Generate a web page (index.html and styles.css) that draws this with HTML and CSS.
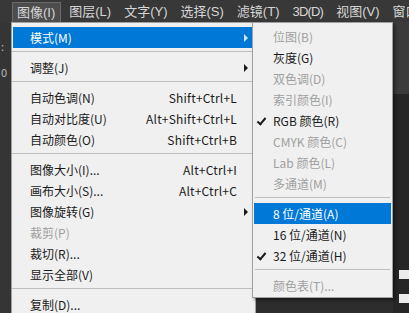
FILE: index.html
```html
<!DOCTYPE html>
<html lang="zh-CN">
<head>
  <meta charset="UTF-8">
  <title>图像 - 模式</title>
  <link rel="stylesheet" href="styles.css">
</head>
<body>
  <div class="app">
    <div class="menubar">
      <span class="bar-item active">图像(I)</span>
      <span class="bar-item">图层(L)</span>
      <span class="bar-item">文字(Y)</span>
      <span class="bar-item">选择(S)</span>
      <span class="bar-item">滤镜(T)</span>
      <span class="bar-item narrow">3D(D)</span>
      <span class="bar-item">视图(V)</span>
      <span class="bar-item">窗口</span>
    </div>

    <div class="workspace">
      <div class="left-strip">
        <span class="mark">:</span>
        <span class="mark">0</span>
      </div>
      <div class="canvas-area"></div>
      <div class="right-panel">
        <div class="panel-top"></div>
        <div class="panel-body">
          <div class="panel-row"></div>
          <div class="panel-row"></div>
        </div>
      </div>
    </div>

    <!-- main dropdown -->
    <div class="menu main-menu">
      <div class="item selected">模式(M)<span class="arrow"></span></div>
      <div class="sep"></div>
      <div class="item">调整(J)<span class="arrow"></span></div>
      <div class="sep"></div>
      <div class="item">自动色调(N)<span class="key">Shift+Ctrl+L</span></div>
      <div class="item">自动对比度(U)<span class="key">Alt+Shift+Ctrl+L</span></div>
      <div class="item">自动颜色(O)<span class="key">Shift+Ctrl+B</span></div>
      <div class="sep"></div>
      <div class="item">图像大小(I)...<span class="key">Alt+Ctrl+I</span></div>
      <div class="item">画布大小(S)...<span class="key">Alt+Ctrl+C</span></div>
      <div class="item">图像旋转(G)<span class="arrow"></span></div>
      <div class="item disabled">裁剪(P)</div>
      <div class="item">裁切(R)...</div>
      <div class="item">显示全部(V)</div>
      <div class="sep"></div>
      <div class="item">复制(D)...</div>
    </div>

    <!-- mode submenu -->
    <div class="menu sub-menu">
      <div class="item disabled">位图(B)</div>
      <div class="item">灰度(G)</div>
      <div class="item disabled">双色调(D)</div>
      <div class="item disabled">索引颜色(I)</div>
      <div class="item checked">RGB 颜色(R)</div>
      <div class="item disabled">CMYK 颜色(C)</div>
      <div class="item disabled">Lab 颜色(L)</div>
      <div class="item disabled">多通道(M)</div>
      <div class="sep"></div>
      <div class="item selected">8 位/通道(A)</div>
      <div class="item">16 位/通道(N)</div>
      <div class="item checked">32 位/通道(H)</div>
      <div class="sep"></div>
      <div class="item disabled">颜色表(T)...</div>
    </div>
  </div>
</body>
</html>
```

FILE: styles.css
```css
body {
  margin: 0;
  background-color: #2a2a2a;
  font-family: "Noto Sans CJK SC", "Noto Sans", sans-serif;
  overflow: hidden;
}

.app {
  position: relative;
  width: 409px;
  height: 313px;
  display: flex;
  flex-direction: column;
}

/* top menubar */
.menubar {
  height: 22px;
  background-color: #383838;
  display: flex;
  align-items: flex-end;
  padding-left: 12px;
  gap: 3px;
  color: #d6d6d6;
  font-family: "Liberation Sans", "Noto Sans CJK SC", sans-serif;
  font-size: 13px;
  flex-shrink: 0;
  overflow: hidden;
}

.bar-item {
  height: 20px;
  line-height: 19px;
  padding: 0 5px;
  white-space: nowrap;
  box-sizing: border-box;
}

.bar-item.narrow {
  letter-spacing: -0.8px;
}

.bar-item.active {
  background-color: #4d4d4d;
  border: 1px solid #6a6a6a;
  border-bottom: none;
  padding: 0 5px 0 4px;
}

/* background behind the menus */
.workspace {
  flex: 1;
  display: flex;
}

.left-strip {
  width: 11px;
  background-color: #353535;
  display: flex;
  flex-direction: column;
  gap: 14px;
  padding-top: 18px;
  color: #bbbbbb;
  font-size: 11px;
  line-height: 12px;
}

.mark {
  padding-left: 1px;
}

.canvas-area {
  flex: 1;
  background-color: #2d2d2d;
}

.right-panel {
  width: 16px;
  display: flex;
  flex-direction: column;
}

.panel-top {
  height: 72px;
  background-color: #3b3b3b;
}

.panel-body {
  flex: 1;
  background-color: #262626;
  padding-top: 176px;
  padding-left: 6px;
  display: flex;
  flex-direction: column;
  gap: 15px;
}

.panel-row {
  height: 9px;
  background-color: #ececec;
}

/* dropdown menus */
.menu {
  position: absolute;
  background-color: #f0f0f0;
  border: 1px solid #a0a0a0;
  box-sizing: border-box;
  font-size: 12px;
  color: #1a1a1a;
}

.main-menu {
  left: 11px;
  top: 22px;
  width: 245px;
  height: 300px;
  padding-top: 4px;
}

.sub-menu {
  left: 252px;
  top: 22px;
  width: 141px;
  height: 276px;
  padding-top: 3px;
  box-shadow: 2px 2px 3px rgba(0, 0, 0, 0.45);
}

.item {
  position: relative;
  height: 21px;
  line-height: 21px;
  margin: 0 1px;
  padding: 0 17px 0 17px;
  display: flex;
  justify-content: space-between;
  white-space: nowrap;
}

.sub-menu .item {
  padding-left: 19px;
}

.item.selected {
  background-color: #0078d7;
  color: #ffffff;
}

.item.disabled {
  color: #a0a0a0;
}

.key {
  letter-spacing: 0.2px;
}

.arrow {
  position: absolute;
  right: 6px;
  top: 7px;
  width: 0;
  height: 0;
  border-top: 4px solid transparent;
  border-bottom: 4px solid transparent;
  border-left: 4px solid #1a1a1a;
}

.item.selected .arrow {
  border-left-color: #cfe6fa;
}

.item.checked::before {
  content: "";
  position: absolute;
  left: 5px;
  top: 6px;
  width: 3px;
  height: 7px;
  border-right: 2px solid #1a1a1a;
  border-bottom: 2px solid #1a1a1a;
  transform: rotate(40deg);
}

.sep {
  height: 9px;
  position: relative;
}

.sep::after {
  content: "";
  position: absolute;
  left: 0;
  right: 0;
  top: 3px;
  height: 1px;
  background-color: #bdbdbd;
}

.sub-menu .sep::after {
  left: 2px;
  right: 2px;
}
```
